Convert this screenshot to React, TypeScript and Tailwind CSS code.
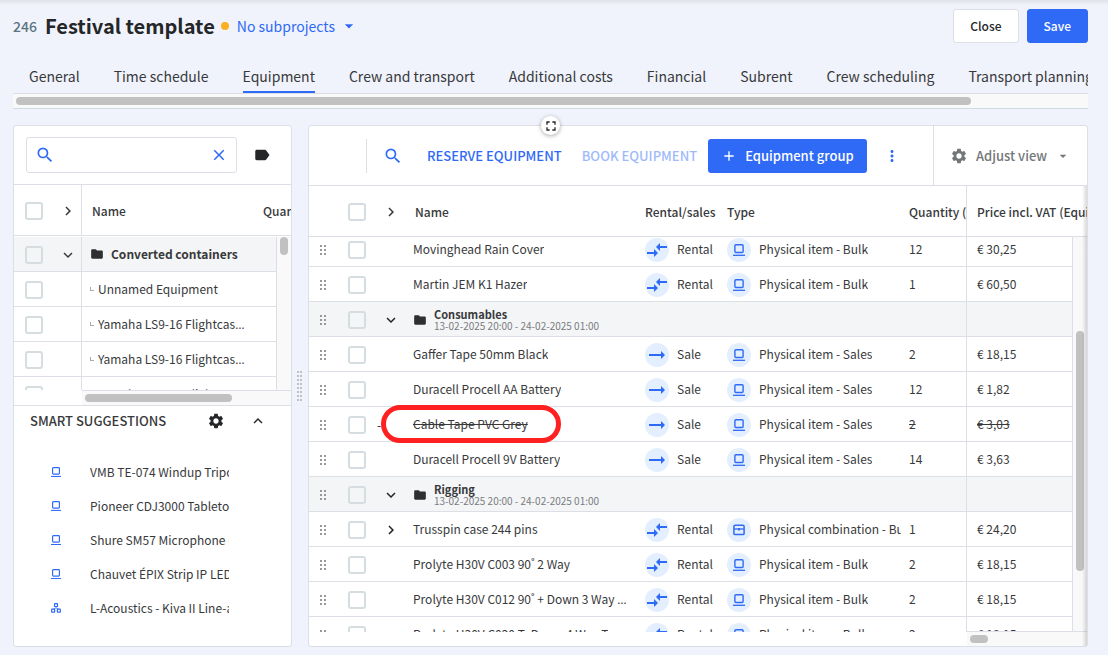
import { useLayoutEffect, useRef } from "react";
import type { ReactNode } from "react";
import clsx from "clsx";
import {
  MdAdd,
  MdArrowDropDown,
  MdArrowRightAlt,
  MdClose,
  MdCompareArrows,
  MdExpandLess,
  MdExpandMore,
  MdFolder,
  MdFullscreen,
  MdKeyboardArrowRight,
  MdLabel,
  MdMoreVert,
  MdSearch,
  MdSettings,
} from "react-icons/md";

type Kind = "item" | "combination" | "set";

type Row =
  | { group: true; name: string; dates: string }
  | {
      group?: false;
      name: string;
      mode: "Rental" | "Sale";
      type: string;
      kind?: Kind;
      qty: string;
      price: string;
      removed?: boolean;
      expandable?: boolean;
    };

const TABS = [
  "General",
  "Time schedule",
  "Equipment",
  "Crew and transport",
  "Additional costs",
  "Financial",
  "Subrent",
  "Crew scheduling",
  "Transport planning",
];

const DATES = "13-02-2025 20:00 - 24-02-2025 01:00";

const ROWS: Row[] = [
  { name: "Movinghead Rain Cover", mode: "Rental", type: "Physical item - Bulk", qty: "12", price: "€ 30,25" },
  { name: "Martin JEM K1 Hazer", mode: "Rental", type: "Physical item - Bulk", qty: "1", price: "€ 60,50" },
  { group: true, name: "Consumables", dates: DATES },
  { name: "Gaffer Tape 50mm Black", mode: "Sale", type: "Physical item - Sales", qty: "2", price: "€ 18,15" },
  { name: "Duracell Procell AA Battery", mode: "Sale", type: "Physical item - Sales", qty: "12", price: "€ 1,82" },
  { name: "Cable Tape PVC Grey", mode: "Sale", type: "Physical item - Sales", qty: "2", price: "€ 3,03", removed: true },
  { name: "Duracell Procell 9V Battery", mode: "Sale", type: "Physical item - Sales", qty: "14", price: "€ 3,63" },
  { group: true, name: "Rigging", dates: DATES },
  { name: "Trusspin case 244 pins", mode: "Rental", type: "Physical combination - Bulk", kind: "combination", qty: "1", price: "€ 24,20", expandable: true },
  { name: "Prolyte H30V C003 90˚ 2 Way", mode: "Rental", type: "Physical item - Bulk", qty: "2", price: "€ 18,15" },
  { name: "Prolyte H30V C012 90˚ + Down 3 Way Left", mode: "Rental", type: "Physical item - Bulk", qty: "2", price: "€ 18,15" },
  { name: "Prolyte H30V C020 T- Down 4 Way T", mode: "Rental", type: "Physical item - Bulk", qty: "2", price: "€ 18,15" },
];

const CONTAINERS = [
  "Unnamed Equipment",
  "Yamaha LS9-16 Flightcase 1",
  "Yamaha LS9-16 Flightcase 2",
  "Yamaha LS9-16 Flightcase 3",
];

const SUGGESTIONS: { name: string; kind: Kind }[] = [
  { name: "VMB TE-074 Windup Tripod", kind: "item" },
  { name: "Pioneer CDJ3000 Tabletop", kind: "item" },
  { name: "Shure SM57 Microphone (dynamic)", kind: "item" },
  { name: "Chauvet ÉPIX Strip IP LED", kind: "item" },
  { name: "L-Acoustics - Kiva II Line-array", kind: "set" },
];

function KindIcon({ kind, className }: { kind: Kind; className: string }) {
  return (
    <svg viewBox="0 0 12 12" className={className} fill="none" stroke="currentColor" aria-hidden="true">
      {kind === "item" && (
        <>
          <rect x="1.9" y="0.7" width="8.2" height="7.8" rx="1" strokeWidth="1.4" />
          <path d="M0 11.3h12" strokeWidth="1.3" />
        </>
      )}
      {kind === "combination" && (
        <>
          <rect x="0.9" y="1.2" width="10.2" height="9.4" rx="1.2" strokeWidth="1.5" />
          <path d="M1 5h10" strokeWidth="1.3" />
          <path d="M6 3.9v2.6" strokeWidth="1.8" />
        </>
      )}
      {kind === "set" && (
        <>
          <rect x="4.2" y="0.8" width="3.6" height="3.4" rx="0.4" strokeWidth="1.4" />
          <rect x="0.8" y="7.4" width="3.6" height="3.6" rx="0.4" strokeWidth="1.4" />
          <rect x="7.6" y="7.4" width="3.6" height="3.6" rx="0.4" strokeWidth="1.4" />
          <path d="M6 4.5v1.6M3 7.2l3-1.2 3 1.2" strokeWidth="0.8" />
        </>
      )}
    </svg>
  );
}

function DragHandle() {
  return (
    <svg viewBox="0 0 8 10" className="h-[10px] w-2 fill-[#97999b]" aria-hidden="true">
      {[0, 4, 8].map((y) => (
        <g key={y}>
          <rect x="1" y={y} width="2" height="2" />
          <rect x="5" y={y} width="2" height="2" />
        </g>
      ))}
    </svg>
  );
}

function Check({ label }: { label: string }) {
  return (
    <input
      type="checkbox"
      aria-label={label}
      className="size-[18px] shrink-0 appearance-none rounded-[3px] border-2 border-[#d5dde1] checked:bg-[#2f6af6]"
    />
  );
}

function Bubble({ children }: { children: ReactNode }) {
  return (
    <span className="mt-0.5 flex size-6 shrink-0 items-center justify-center rounded-full bg-[#e3effe] text-[#2f6af6]">
      {children}
    </span>
  );
}

/* The outer font supplies a baseline ellipsis; the CJK face centres it vertically. */
function Truncated({ children, struck }: { children: string; struck?: boolean }) {
  return (
    <span className="block truncate font-['Open_Sans',sans-serif]">
      <span className={clsx("font-['Noto_Sans_CJK_KR','Noto_Sans',sans-serif]", struck && "line-through")}>
        {children}
      </span>
    </span>
  );
}

const HEAD_GRID = "grid grid-cols-[28px_40px_28px_minmax(0,1fr)_82px_182px_57px_121px]";
const BODY_GRID = "grid grid-cols-[28px_40px_28px_minmax(0,1fr)_82px_182px_57px_107px]";

function EquipmentRow({ row }: { row: Row }) {
  return (
    <tr
      className={clsx(
        BODY_GRID,
        "h-[35px] border-b border-[#dcdfe5]",
        row.group && "bg-[#f4f5f7]",
      )}
    >
      <td className="flex items-center justify-center pt-0.5">
        <DragHandle />
      </td>
      <td className="flex items-center justify-center pt-0.5">
        <Check label={`Select ${row.name}`} />
      </td>
      <td className="relative flex items-center justify-center pt-0.5 text-[#222426]">
        {row.group && (
          <button aria-label={`Collapse ${row.name}`}>
            <MdExpandMore className="size-[18px]" />
          </button>
        )}
        {!row.group && row.expandable && (
          <button aria-label={`Expand ${row.name}`}>
            <MdKeyboardArrowRight className="size-[18px]" />
          </button>
        )}
        {!row.group && row.removed && <span className="absolute left-0">-</span>}
      </td>
      {row.group ? (
        <td className="col-span-4 flex items-center gap-[7px] pl-2 pt-0.5">
          <MdFolder className="size-[14px] shrink-0 text-[#2d2f31]" />
          <span className="flex flex-col text-[10px] leading-[12px]">
            <span className="text-[11px] font-bold">{row.name}</span>
            <span className="text-[#7a7c7f]">{row.dates}</span>
          </span>
        </td>
      ) : (
        <>
          <td className="relative flex items-center pl-2 pr-4">
            <Truncated struck={row.removed}>{row.name}</Truncated>
            {row.removed && (
              <span className="pointer-events-none absolute -left-6 -top-0.5 h-[38px] w-[180px] rounded-full border-[5px] border-[#ff2121]" />
            )}
          </td>
          <td className="flex items-center gap-2">
            <Bubble>
              {row.mode === "Rental" ? (
                <MdCompareArrows className="size-6" />
              ) : (
                <MdArrowRightAlt className="size-6" />
              )}
            </Bubble>
            {row.mode}
          </td>
          <td className="flex items-center gap-2 pr-2">
            <Bubble>
              <KindIcon kind={row.kind ?? "item"} className="size-3" />
            </Bubble>
            <span className="overflow-hidden whitespace-nowrap">{row.type}</span>
          </td>
          <td className={clsx("flex items-center", row.removed && "line-through")}>{row.qty}</td>
        </>
      )}
      <td className="flex items-center border-x border-[#dcdfe5] pl-[10px]">
        {!row.group && <span className={clsx(row.removed && "line-through")}>{row.price}</span>}
      </td>
    </tr>
  );
}

function EquipmentTable() {
  const body = useRef<HTMLTableSectionElement>(null);
  useLayoutEffect(() => {
    if (body.current) body.current.scrollTop = 5;
  }, []);
  return (
    <div className="relative flex min-h-0 flex-1 flex-col">
      <table className="flex min-h-0 flex-1 flex-col">
        <thead className="block shrink-0">
          <tr className={clsx(HEAD_GRID, "h-[51px] items-stretch border-b border-[#dcdfe5] text-left [&>th]:flex [&>th]:items-center [&>th]:pt-0.5 [&>th]:font-medium")}>
            <th />
            <th className="justify-center">
              <Check label="Select all equipment" />
            </th>
            <th className="justify-center">
              <button aria-label="Expand all equipment">
                <MdKeyboardArrowRight className="size-[18px]" />
              </button>
            </th>
            <th className="pl-[10px]">Name</th>
            <th>Rental/sales</th>
            <th>Type</th>
            <th className="overflow-hidden whitespace-nowrap">Quantity (Total)</th>
            <th className="overflow-hidden whitespace-nowrap border-l border-[#dcdfe5] pl-[10px]">
              Price incl. VAT (Equipment)
            </th>
          </tr>
        </thead>
        <tbody ref={body} className="mb-[14px] mr-[14px] block min-h-0 flex-1 overflow-hidden">
          {ROWS.map((row, i) => (
            <EquipmentRow key={i} row={row} />
          ))}
        </tbody>
      </table>
      <div className="absolute bottom-0 right-0 top-[51px] w-[14px] bg-[#f9f9f9] px-[3px]">
        <div className="mt-[94px] h-60 rounded-full bg-[#c1c1c1]" />
      </div>
      <div className="absolute bottom-0 right-0 h-[15px] w-[120px] border-t border-[#dcdfe5] bg-[#f9f9f9] px-[3px] py-[3px]">
        <div className="h-2 w-[18px] rounded-full bg-[#c1c1c1]" />
      </div>
      <div className="pointer-events-none absolute bottom-0 right-0 top-0 w-[5px] bg-linear-to-l from-black/15 to-transparent" />
    </div>
  );
}

function ContainersTable() {
  const grid = "grid grid-cols-[40px_28px_minmax(0,1fr)]";
  return (
    <div className="relative flex min-h-0 flex-1 flex-col overflow-hidden">
      <table className="flex min-h-0 flex-1 flex-col">
        <thead className="mb-px block shrink-0">
          <tr className="grid h-[51px] grid-cols-[40px_28px_minmax(0,1fr)_28px] border-b border-[#dcdfe5] text-left [&>th]:flex [&>th]:items-center [&>th]:pt-0.5 [&>th]:font-medium">
            <th className="justify-center">
              <Check label="Select all containers" />
            </th>
            <th className="justify-center border-r border-[#dcdfe5]">
              <button aria-label="Expand all containers">
                <MdKeyboardArrowRight className="size-[18px]" />
              </button>
            </th>
            <th className="pl-[10px]">Name</th>
            <th className="overflow-hidden whitespace-nowrap">Quantity</th>
          </tr>
        </thead>
        <tbody className="mb-[15px] mr-[14px] block min-h-0 flex-1 overflow-hidden">
          <tr className={clsx(grid, "h-[35px] border-b border-[#dcdfe5] bg-[#f4f5f7]")}>
            <td className="flex items-center justify-center pt-0.5">
              <Check label="Select Converted containers" />
            </td>
            <td className="flex items-center justify-center border-r border-[#dcdfe5] pt-0.5">
              <button aria-label="Collapse Converted containers">
                <MdExpandMore className="size-[18px]" />
              </button>
            </td>
            <td className="flex items-center gap-[7px] border-r border-[#dcdfe5] pl-2 font-bold">
              <MdFolder className="size-[14px] shrink-0 text-[#2d2f31]" />
              Converted containers
            </td>
          </tr>
          {CONTAINERS.map((name) => (
            <tr key={name} className={clsx(grid, "h-[35px] border-b border-[#dcdfe5]")}>
              <td className="flex items-center justify-center pt-0.5">
                <Check label={`Select ${name}`} />
              </td>
              <td className="border-r border-[#dcdfe5]" />
              <td className="flex items-center gap-1 border-r border-[#dcdfe5] pl-2 pr-7">
                <span className="size-1 shrink-0 border-b border-l border-[#a9acaf]" />
                <Truncated>{name}</Truncated>
              </td>
            </tr>
          ))}
        </tbody>
      </table>
      <div className="absolute bottom-0 right-0 top-[52px] w-[14px] bg-[#f9f9f9] px-[3px]">
        <div className="h-[18px] rounded-full bg-[#c1c1c1]" />
      </div>
      <div className="absolute bottom-0 left-[68px] right-0 h-[15px] border-t border-[#dcdfe5] bg-[#f9f9f9] px-[3px] py-[3px]">
        <div className="h-2 w-[147px] rounded-full bg-[#c1c1c1]" />
      </div>
    </div>
  );
}

export default function App() {
  return (
    <div className="flex h-screen flex-col overflow-hidden bg-[#f0f3fb] pb-2 pl-[13px] pr-5 font-['Noto_Sans_CJK_KR','Noto_Sans',sans-serif] text-[12px] leading-4 text-[#38393b]">
      <div className="-ml-[13px] -mr-5 h-[9px] shrink-0 bg-linear-to-b from-[#dfe2e9] to-[#f0f3fb] to-60%" />
      <header className="flex h-[34px] shrink-0 items-center">
        <span className="text-[14px] font-medium text-[#5c7482]">246</span>
        <h1 className="ml-2 text-[20px] font-bold leading-7 text-[#242628]">Festival template</h1>
        <span className="ml-1.5 size-2 rounded-full bg-[#fbb024]" />
        <button className="ml-2 flex items-center gap-1 text-[14px] text-[#2f6af6]">
          No subprojects
          <MdArrowDropDown className="size-5" />
        </button>
        <div className="ml-auto flex gap-2">
          <button className="h-[34px] rounded-[3px] border border-[#dcdfe5] bg-white px-4 font-medium text-[#242628]">Close</button>
          <button className="h-[34px] rounded-[3px] border border-[#2f6af6] bg-[#2f6af6] px-4 font-medium text-white">Save</button>
        </div>
      </header>

      <nav className="mt-[18px] shrink-0 overflow-hidden">
        <div className="flex gap-[34px] border-b border-[#dcdfe5] pl-4 text-[14px] leading-5">
          {TABS.map((tab) => (
            <a
              key={tab}
              href="#"
              className={clsx(
                "shrink-0 whitespace-nowrap border-b-2 py-[5px]",
                tab === "Equipment" ? "border-[#2f6af6]" : "border-transparent",
              )}
            >
              {tab}
            </a>
          ))}
        </div>
        <div className="border-b border-[#d0dae2] bg-[#f9f9f9] px-[3px] py-[3px]">
          <div className="h-2 w-[89.3%] rounded-full bg-[#c1c1c1]" />
        </div>
      </nav>

      <main className="mt-4 flex min-h-0 flex-1">
        <aside className="flex w-[279px] shrink-0 flex-col overflow-hidden rounded-[3px] border border-[#dcdfe5] bg-white">
          <div className="flex h-[59px] shrink-0 items-center border-b border-[#dcdfe5] pl-3 pr-5">
            <div className="flex h-9 flex-1 items-center rounded-[3px] border border-[#dcdfe5] px-2 text-[#2f6af6]">
              <MdSearch className="size-5 shrink-0" />
              <input aria-label="Search equipment" className="min-w-0 flex-1 px-2 outline-none" />
              <button aria-label="Clear search">
                <MdClose className="size-[18px]" />
              </button>
            </div>
            <button aria-label="Filter by tag" className="ml-4 text-[#242628]">
              <MdLabel className="size-[18px]" />
            </button>
          </div>
          <ContainersTable />
          <section className="shrink-0 border-t border-[#dcdfe5] pb-[21px]">
            <div className="flex h-[30px] items-center pl-4 pr-6">
              <h2 className="text-[13px] font-medium">SMART SUGGESTIONS</h2>
              <button aria-label="Suggestion settings" className="ml-auto text-[#242628]">
                <MdSettings className="size-[18px]" />
              </button>
              <button aria-label="Collapse suggestions" className="ml-6 text-[#242628]">
                <MdExpandLess className="size-[18px]" />
              </button>
            </div>
            <ul className="mt-[19px]">
              {SUGGESTIONS.map((s) => (
                <li key={s.name} className="flex h-[34px] items-center pl-[37px] pr-[62px]">
                  <KindIcon kind={s.kind} className="size-[10px] shrink-0 text-[#2f6af6]" />
                  <span className="ml-[29px] overflow-hidden whitespace-nowrap">{s.name}</span>
                </li>
              ))}
            </ul>
          </section>
        </aside>

        <div className="flex w-4 shrink-0 items-center pl-[5px]" role="separator">
          <svg viewBox="0 0 5 30" className="h-[30px] w-[5px] fill-[#bfc1c4]" aria-hidden="true">
            {[0, 4, 8, 12, 16, 20, 24, 28].map((y) => (
              <g key={y}>
                <rect x="0" y={y} width="2" height="2" />
                <rect x="3" y={y} width="2" height="2" />
              </g>
            ))}
          </svg>
        </div>

        <section className="relative flex min-w-0 flex-1 flex-col rounded-[3px] border border-[#dcdfe5] bg-white">
          <button
            aria-label="Full screen"
            className="absolute -top-[10px] left-[232px] flex size-[19px] items-center justify-center rounded-full bg-white text-[#242628] shadow-[0_1px_4px_rgba(0,0,0,0.35)]"
          >
            <MdFullscreen className="size-4" />
          </button>
          <div className="flex h-[60px] shrink-0 items-center border-b border-[#dcdfe5] pl-[57px] text-[13px] font-medium">
            <div className="flex h-[34px] items-center border-l border-[#dcdfe5] pl-4 text-[#2f6af6]">
              <button aria-label="Search rows">
                <MdSearch className="size-5" />
              </button>
              <button className="ml-6">RESERVE EQUIPMENT</button>
              <button disabled className="ml-5 text-[#9fbafb]">BOOK EQUIPMENT</button>
              <button className="ml-[11px] flex h-[34px] items-center gap-2 rounded-[3px] bg-[#2f6af6] px-[13px] text-white">
                <MdAdd className="size-4" />
                Equipment group
              </button>
              <button aria-label="More actions" className="ml-4">
                <MdMoreVert className="size-[18px]" />
              </button>
            </div>
            <button className="ml-auto flex h-full w-[154px] items-center gap-2 border-l border-[#dcdfe5] pl-4 text-[#747779]">
              <MdSettings className="size-[18px]" />
              Adjust view
              <MdArrowDropDown className="size-4" />
            </button>
          </div>
          <EquipmentTable />
        </section>
      </main>
    </div>
  );
}
